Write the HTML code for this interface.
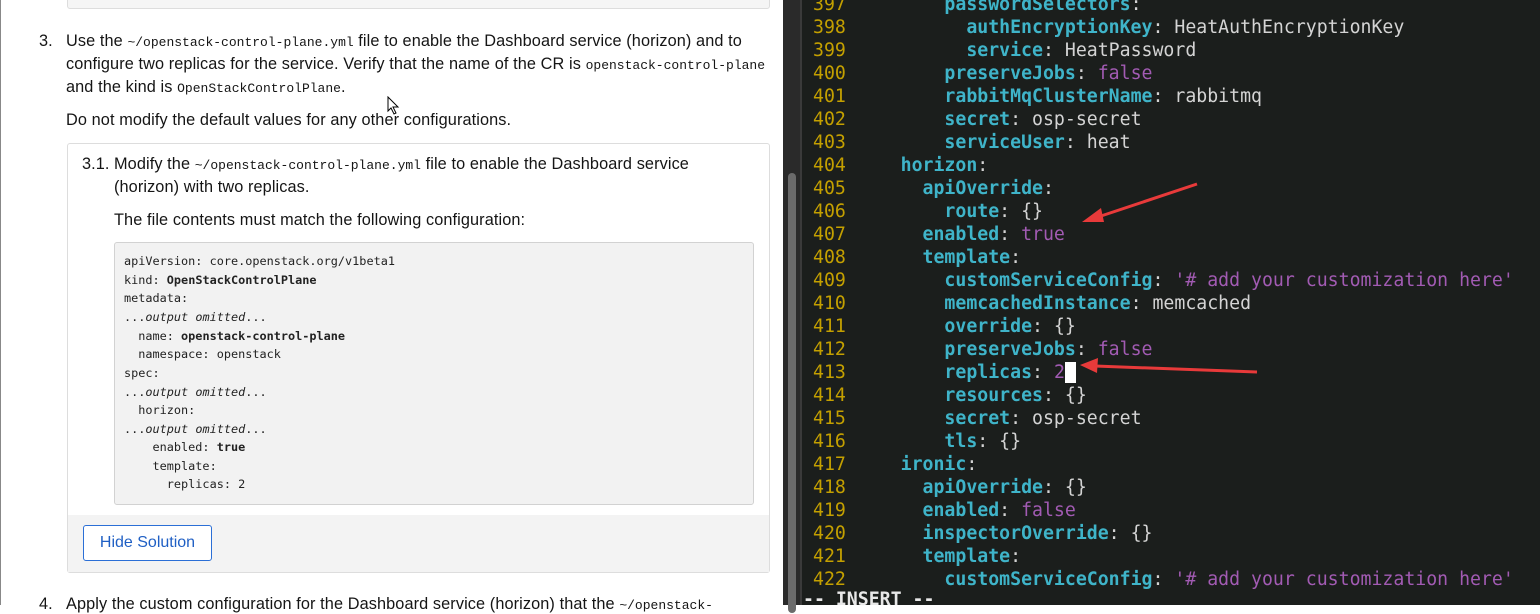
<!DOCTYPE html>
<html><head><meta charset="utf-8"><style>
*{margin:0;padding:0;box-sizing:border-box}
body{width:1540px;height:605px;overflow:hidden;background:#fff;position:relative;font-family:"Liberation Sans",sans-serif}
#left{position:absolute;left:0;top:0;width:783px;height:605px;background:#fff;border-left:1px solid #888;color:#151515;font-size:16.3px;letter-spacing:0.1px}
.m{font-family:"Liberation Mono",monospace;font-size:13px;letter-spacing:0}
.t{position:absolute;white-space:nowrap}
#sb{position:absolute;left:783px;top:0;width:17px;height:605px;background:#2a2a2a}
#thumb{position:absolute;left:788px;top:173px;width:8px;height:440px;background:#6b6b6b;border-radius:4px}
#term{position:absolute;left:800px;top:0;width:740px;height:605px;background:#1b1e1c;border-left:2px solid #3a3a3a;font-family:"DejaVu Sans Mono",monospace;font-size:18.2px;color:#d4d4d4}
.l{position:absolute;left:11px;white-space:pre;line-height:23px;height:23px}
.n{color:#c4a000}
.k{color:#3fb4c9;font-weight:bold}
.p{color:#a25bb3}
.pre{position:absolute;left:113px;top:242px;width:640px;height:263px;background:#f2f2f2;border:1px solid #d2d2d2;border-radius:3px;font-family:"DejaVu Sans Mono",monospace;font-size:11.85px;color:#222;letter-spacing:0}
.pre div{position:absolute;left:9px;white-space:pre}
</style></head><body>
<div id="left">
 <div style="position:absolute;left:66px;top:-10px;width:703px;height:19px;background:#f5f5f5;border:1px solid #ddd;border-radius:3px"></div>
 <div class="t" style="left:38px;top:32px">3.</div>
 <div class="t" style="left:65px;top:32px">Use the <span class="m">~/openstack-control-plane.yml</span> file to enable the Dashboard service (horizon) and to</div>
 <div class="t" style="left:65px;top:55px">configure two replicas for the service. Verify that the name of the CR is <span class="m">openstack-control-plane</span></div>
 <div class="t" style="left:65px;top:78px">and the kind is <span class="m">OpenStackControlPlane</span>.</div>
 <div class="t" style="left:65px;top:111px">Do not modify the default values for any other configurations.</div>
 <div style="position:absolute;left:66px;top:143px;width:703px;height:430px;border:1px solid #ddd;border-radius:3px;background:#fff">
  <div style="position:absolute;left:0;right:0;top:371px;bottom:0;background:#f3f3f3"></div>
 </div>
 <div class="t" style="left:81px;top:155px">3.1.</div>
 <div class="t" style="left:113px;top:155px">Modify the <span class="m">~/openstack-control-plane.yml</span> file to enable the Dashboard service</div>
 <div class="t" style="left:113px;top:178px">(horizon) with two replicas.</div>
 <div class="t" style="left:113px;top:211px">The file contents must match the following configuration:</div>
 <div class="pre">
  <div style="top:11px">apiVersion: core.openstack.org/v1beta1</div>
  <div style="top:30px">kind: <b>OpenStackControlPlane</b></div>
  <div style="top:48px">metadata:</div>
  <div style="top:67px">...<i>output omitted</i>...</div>
  <div style="top:86px">  name: <b>openstack-control-plane</b></div>
  <div style="top:104px">  namespace: openstack</div>
  <div style="top:123px">spec:</div>
  <div style="top:142px">...<i>output omitted</i>...</div>
  <div style="top:160px">  horizon:</div>
  <div style="top:179px">...<i>output omitted</i>...</div>
  <div style="top:197px">    enabled: <b>true</b></div>
  <div style="top:216px">    template:</div>
  <div style="top:234px">      replicas: 2</div>
 </div>
 <div style="position:absolute;left:82px;top:525px;width:129px;height:36px;border:1px solid #2b6fd6;border-radius:3px;background:#fff;color:#1f5fc4;font-size:16px;letter-spacing:0;text-align:center;line-height:34px">Hide Solution</div>
 <div class="t" style="left:38px;top:595px">4.</div>
 <div class="t" style="left:65px;top:595px">Apply the custom configuration for the Dashboard service (horizon) that the <span class="m">~/openstack-</span></div>
 <svg style="position:absolute;left:386px;top:96px" width="14" height="20"><path d="M1 1 L1 15 L4 12 L7 18 L9 17 L6 11 L11 11 Z" fill="#fff" stroke="#000" stroke-width="1"/></svg>
</div>
<div id="sb"></div><div id="thumb"></div>
<div id="term">
<div class="l" style="top:-7px"><span class="n">397 </span>        <span class="k">passwordSelectors</span>:</div>
<div class="l" style="top:16px"><span class="n">398 </span>          <span class="k">authEncryptionKey</span>: HeatAuthEncryptionKey</div>
<div class="l" style="top:39px"><span class="n">399 </span>          <span class="k">service</span>: HeatPassword</div>
<div class="l" style="top:62px"><span class="n">400 </span>        <span class="k">preserveJobs</span>: <span class="p">false</span></div>
<div class="l" style="top:85px"><span class="n">401 </span>        <span class="k">rabbitMqClusterName</span>: rabbitmq</div>
<div class="l" style="top:108px"><span class="n">402 </span>        <span class="k">secret</span>: osp-secret</div>
<div class="l" style="top:131px"><span class="n">403 </span>        <span class="k">serviceUser</span>: heat</div>
<div class="l" style="top:154px"><span class="n">404 </span>    <span class="k">horizon</span>:</div>
<div class="l" style="top:177px"><span class="n">405 </span>      <span class="k">apiOverride</span>:</div>
<div class="l" style="top:200px"><span class="n">406 </span>        <span class="k">route</span>: {}</div>
<div class="l" style="top:223px"><span class="n">407 </span>      <span class="k">enabled</span>: <span class="p">true</span></div>
<div class="l" style="top:246px"><span class="n">408 </span>      <span class="k">template</span>:</div>
<div class="l" style="top:269px"><span class="n">409 </span>        <span class="k">customServiceConfig</span>: <span class="p">'# add your customization here'</span></div>
<div class="l" style="top:292px"><span class="n">410 </span>        <span class="k">memcachedInstance</span>: memcached</div>
<div class="l" style="top:315px"><span class="n">411 </span>        <span class="k">override</span>: {}</div>
<div class="l" style="top:338px"><span class="n">412 </span>        <span class="k">preserveJobs</span>: <span class="p">false</span></div>
<div class="l" style="top:361px"><span class="n">413 </span>        <span class="k">replicas</span>: <span class="p">2</span><span style="background:#fff"> </span></div>
<div class="l" style="top:384px"><span class="n">414 </span>        <span class="k">resources</span>: {}</div>
<div class="l" style="top:407px"><span class="n">415 </span>        <span class="k">secret</span>: osp-secret</div>
<div class="l" style="top:430px"><span class="n">416 </span>        <span class="k">tls</span>: {}</div>
<div class="l" style="top:453px"><span class="n">417 </span>    <span class="k">ironic</span>:</div>
<div class="l" style="top:476px"><span class="n">418 </span>      <span class="k">apiOverride</span>: {}</div>
<div class="l" style="top:499px"><span class="n">419 </span>      <span class="k">enabled</span>: <span class="p">false</span></div>
<div class="l" style="top:522px"><span class="n">420 </span>      <span class="k">inspectorOverride</span>: {}</div>
<div class="l" style="top:545px"><span class="n">421 </span>      <span class="k">template</span>:</div>
<div class="l" style="top:568px"><span class="n">422 </span>        <span class="k">customServiceConfig</span>: <span class="p">'# add your customization here'</span></div>
<div class="l" style="top:588px;left:1px;font-weight:bold;color:#e8e8e8">-- INSERT --</div>
</div>
<svg style="position:absolute;left:0;top:0" width="1540" height="605">
 <line x1="1197" y1="184" x2="1095" y2="218" stroke="#e83a3a" stroke-width="3"/>
 <path d="M1082 222 L1101 208 L1104 222 Z" fill="#e83a3a"/>
 <line x1="1257" y1="372" x2="1095" y2="366" stroke="#e83a3a" stroke-width="3"/>
 <path d="M1080 365 L1098 358 L1097 373 Z" fill="#e83a3a"/>
</svg>
</body></html>
